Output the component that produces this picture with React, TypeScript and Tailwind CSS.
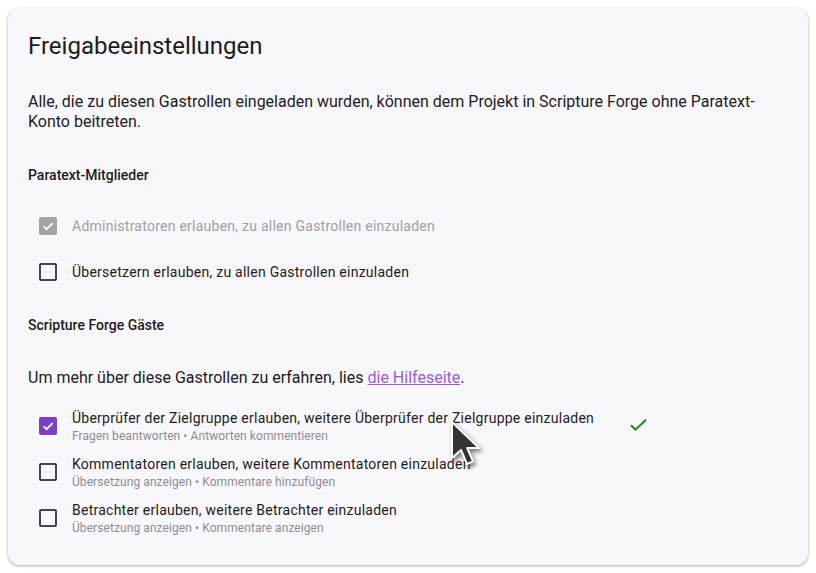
import React from "react";

const CheckIcon = ({ color = "white" }: { color?: string }) => (
  <svg viewBox="0 0 24 24" className="w-[14px] h-[14px]" fill="none">
    <path d="M4.5 12.5l5 5L20 7" stroke={color} strokeWidth="3" />
  </svg>
);

function Box({ state }: { state: "checked" | "disabled" | "empty" }) {
  if (state === "checked")
    return (
      <div className="w-[18px] h-[18px] rounded-[2px] bg-[#7a3fc3] flex items-center justify-center shrink-0">
        <CheckIcon />
      </div>
    );
  if (state === "disabled")
    return (
      <div className="w-[18px] h-[18px] rounded-[2px] bg-[#a3a2a6] flex items-center justify-center shrink-0">
        <CheckIcon />
      </div>
    );
  return <div className="w-[18px] h-[18px] rounded-[2px] border-2 border-[#47434d] shrink-0" />;
}

function Row({
  state,
  label,
  sub,
  muted,
  extra,
}: {
  state: "checked" | "disabled" | "empty";
  label: string;
  sub?: string;
  muted?: boolean;
  extra?: React.ReactNode;
}) {
  return (
    <div className="flex items-center h-[40px]">
      <div className="w-[18px] ml-[11px] flex items-center">
        <Box state={state} />
      </div>
      <div className="ml-[15px] flex flex-col">
        <div className="flex items-center">
          <span className={`text-[14px] leading-[20px] tracking-[0.25px] ${muted ? "text-[#a09ea4]" : "text-[#1d1b20]"}`}>{label}</span>
          {extra}
        </div>
        {sub && <span className="text-[12px] leading-[16px] tracking-[0.08px] text-[#8e8c92]">{sub}</span>}
      </div>
    </div>
  );
}

export default function App() {
  return (
    <div className="w-[816px] h-[573px] bg-white relative overflow-hidden" style={{ fontFamily: "Roboto, 'Noto Sans', sans-serif" }}>
      <div className="absolute left-[8px] top-[8px] w-[800px] h-[557px] rounded-[12px] bg-[#f8f7fc] shadow-[0_1px_3px_rgba(0,0,0,0.35)] px-[20px] pt-[22px]">
        <h1 className="text-[24px] leading-[32px] text-[#1d1b20] font-normal">Freigabeeinstellungen</h1>
        <p className="mt-[30px] text-[16px] leading-[20px] text-[#1d1b20]">
          Alle, die zu diesen Gastrollen eingeladen wurden, können dem Projekt in Scripture Forge ohne Paratext-Konto beitreten.
        </p>
        <h2 className="mt-[33px] text-[14px] leading-[20px] font-medium text-[#1d1b20]">Paratext-Mitglieder</h2>
        <div className="mt-[21px] flex flex-col gap-[6px]">
          <Row state="disabled" muted label="Administratoren erlauben, zu allen Gastrollen einzuladen" />
          <Row state="empty" label="Übersetzern erlauben, zu allen Gastrollen einzuladen" />
        </div>
        <h2 className="mt-[23px] text-[14px] leading-[20px] font-medium text-[#1d1b20]">Scripture Forge Gäste</h2>
        <p className="mt-[31px] text-[16px] leading-[24px] text-[#1d1b20]">
          Um mehr über diese Gastrollen zu erfahren, lies{" "}
          <a className="text-[#9a5bd8] underline">die Hilfeseite</a>.
        </p>
        <div className="mt-[16px] flex flex-col gap-[6px]">
          <Row
            state="checked"
            label="Überprüfer der Zielgruppe erlauben, weitere Überprüfer der Zielgruppe einzuladen"
            sub="Fragen beantworten • Antworten kommentieren"
            extra={
              <svg viewBox="0 0 17 12" className="w-[17px] h-[12px] ml-[36px] mt-[7px] -mb-[7px] overflow-visible" fill="none">
                <path d="M1 6.2l4.5 4.5L16 0.8" stroke="#138a14" strokeWidth="2" />
              </svg>
            }
          />
          <Row
            state="empty"
            label="Kommentatoren erlauben, weitere Kommentatoren einzuladen"
            sub="Übersetzung anzeigen • Kommentare hinzufügen"
          />
          <Row
            state="empty"
            label="Betrachter erlauben, weitere Betrachter einzuladen"
            sub="Übersetzung anzeigen • Kommentare anzeigen"
          />
        </div>
      </div>
      <svg
        className="absolute left-[446px] top-[418px]"
        width="50"
        height="60"
        viewBox="0 0 25 30"
        style={{ filter: "drop-shadow(2px 3px 2px rgba(0,0,0,0.5))" }}
      >
        <path
          d="M3 2 L3 20 L7.5 16 L10.5 23 L13.5 21.7 L10.6 15 L16.5 15 Z"
          fill="#333333"
          stroke="white"
          strokeWidth="1"
          strokeLinejoin="round"
        />
      </svg>
    </div>
  );
}
